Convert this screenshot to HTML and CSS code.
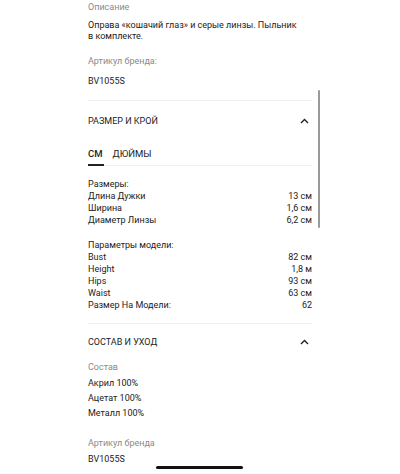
FILE: index.html
```html
<!DOCTYPE html>
<html lang="ru">
<head>
    <meta charset="UTF-8">
    <meta name="viewport" content="width=device-width, initial-scale=1.0">
    <title>Описание</title>
    <link rel="stylesheet" href="styles.css">
</head>
<body>
    <div class="page">
        <div class="info">
            <p class="label">Описание</p>
            <p class="desc">Оправа «кошачий глаз» и серые линзы. Пыльник<br>в комплекте.</p>
            <p class="label label-sku">Артикул бренда:</p>
            <p class="value">BV1055S</p>
        </div>

        <div class="section">
            <div class="section-head">
                <span>РАЗМЕР И КРОЙ</span>
                <svg class="chevron" width="9" height="6" viewBox="0 0 9 6"><path d="M1 5 L4.5 1.5 L8 5" fill="none" stroke="#222" stroke-width="1.4"/></svg>
            </div>
            <div class="tabs">
                <span class="tab active">СМ</span>
                <span class="tab">ДЮЙМЫ</span>
            </div>
            <div class="table">
                <div class="row"><span>Размеры:</span></div>
                <div class="row"><span>Длина Дужки</span><span>13 см</span></div>
                <div class="row"><span>Ширина</span><span>1,6 см</span></div>
                <div class="row"><span>Диаметр Линзы</span><span>6,2 см</span></div>
            </div>
            <div class="table table-model">
                <div class="row"><span>Параметры модели:</span></div>
                <div class="row"><span>Bust</span><span>82 см</span></div>
                <div class="row"><span>Height</span><span>1,8 м</span></div>
                <div class="row"><span>Hips</span><span>93 см</span></div>
                <div class="row"><span>Waist</span><span>63 см</span></div>
                <div class="row"><span>Размер На Модели:</span><span>62</span></div>
            </div>
        </div>

        <div class="section section-care">
            <div class="section-head">
                <span>СОСТАВ И УХОД</span>
                <svg class="chevron" width="9" height="6" viewBox="0 0 9 6"><path d="M1 5 L4.5 1.5 L8 5" fill="none" stroke="#222" stroke-width="1.4"/></svg>
            </div>
            <p class="label">Состав</p>
            <ul class="materials">
                <li>Акрил 100%</li>
                <li>Ацетат 100%</li>
                <li>Металл 100%</li>
            </ul>
            <p class="label label-sku2">Артикул бренда</p>
            <p class="value">BV1055S</p>
        </div>

        <div class="scrollbar"></div>
        <div class="home-bar"></div>
    </div>
</body>
</html>
```

FILE: styles.css
```css
body {
    margin: 0;
    background-color: #fff;
    font-family: Roboto, "Noto Sans", sans-serif;
    color: #222;
    font-size: 9px;
}
.page {
    position: relative;
    width: 400px;
    height: 474px;
    overflow: hidden;
}
.info,
.section {
    width: 224px;
    margin-left: 88px;
}
p {
    margin: 0;
}
.label {
    color: #8a8a8a;
    line-height: 14px;
}
.desc {
    margin-top: 6px;
    line-height: 11px;
}
.label-sku {
    margin-top: 12px;
}
.value {
    margin-top: 6px;
    line-height: 14px;
}
.section {
    border-top: 1px solid #efefef;
    margin-top: 12px;
}
.section-head {
    display: flex;
    justify-content: space-between;
    align-items: center;
    height: 39px;
    padding-right: 3px;
}
.tabs {
    display: flex;
    gap: 9px;
    margin-top: 2px;
    border-bottom: 1px solid #f0f0f0;
}
.tab {
    padding: 6px 0 4px;
    line-height: 12px;
    font-size: 9.5px;
}
.tab.active {
    font-weight: 500;
    border-bottom: 2px solid #222;
    margin-bottom: -1px;
    padding-right: 1px;
}
.table {
    margin-top: 12px;
}
.table-model {
    margin-top: 13px;
    padding-bottom: 1px;
}
.row {
    display: flex;
    justify-content: space-between;
    line-height: 12px;
}
.section-care {
    margin-top: 11px;
}
.section-care .section-head {
    height: 36px;
}
.materials {
    list-style: none;
    margin: 2px 0 0;
    padding: 0;
}
.materials li {
    line-height: 15px;
}
.label-sku2 {
    margin-top: 15px;
}
.section-care .value {
    margin-top: 2px;
}
.scrollbar {
    position: absolute;
    left: 318px;
    top: 90px;
    width: 2px;
    height: 138px;
    background-color: #9a9a9a;
    border-radius: 1px;
}
.home-bar {
    position: absolute;
    left: 156px;
    top: 466px;
    width: 87px;
    height: 3px;
    background-color: #111;
    border-radius: 2px;
}
```
